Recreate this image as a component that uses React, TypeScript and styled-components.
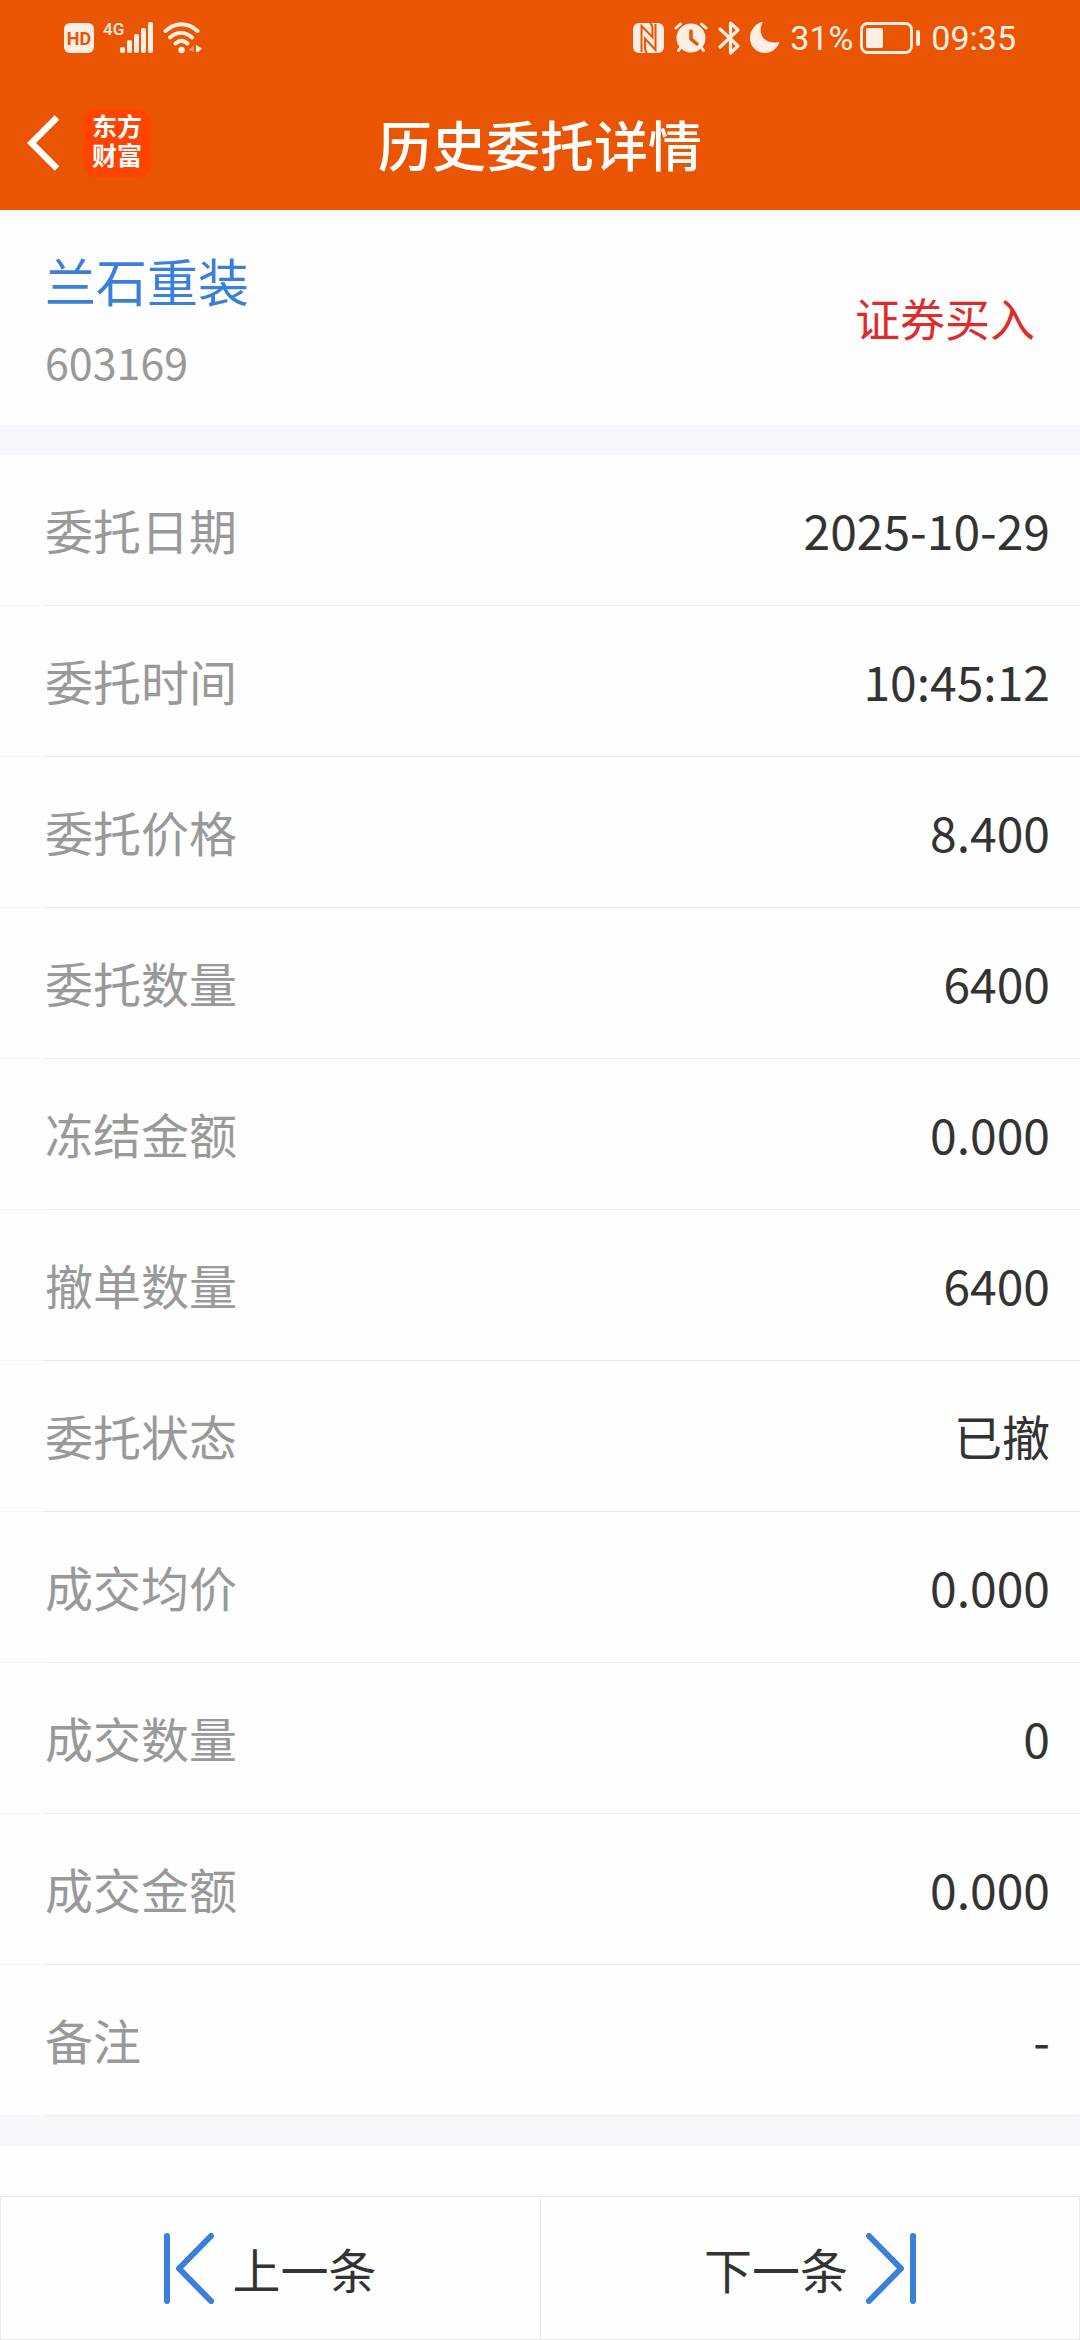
import React from "react";
import styled, { createGlobalStyle } from "styled-components";

const GlobalStyle = createGlobalStyle`
  * { box-sizing: border-box; }
  body {
    margin: 0;
    background: #fefefe;
    color: #333;
    font-family: "Noto Sans CJK SC", "Noto Sans", sans-serif;
  }
  button {
    border: 0;
    margin: 0;
    padding: 0;
    background: none;
    color: inherit;
    font: inherit;
    cursor: pointer;
  }
`;

const Page = styled.div`
  min-height: 100vh;
  display: flex;
  flex-direction: column;
`;

const TopBar = styled.header`
  background: #ea5504;
  color: #fff;
`;

const StatusBar = styled.div`
  height: 75px;
  padding: 0 64px;
  display: flex;
  align-items: center;
  justify-content: space-between;
  color: #ffeee4;
  font-family: Roboto, "Liberation Sans", sans-serif;
`;

const StatusGroup = styled.div<{ $gap: number }>`
  display: flex;
  align-items: center;
  gap: ${({ $gap }) => $gap}px;

  svg { display: block; }
`;

const StatusText = styled.span`
  font-size: 34px;
  line-height: 40px;
`;

const HdBadge = styled.span`
  width: 30px;
  height: 30px;
  border-radius: 6px;
  background: #ffeee4;
  color: #ea5504;
  font-size: 18px;
  font-weight: 700;
  line-height: 31px;
  text-align: center;
`;

const Signal = styled.span`
  position: relative;
  padding-left: 17px;
`;

const Network = styled.span`
  position: absolute;
  top: 0;
  left: 0;
  font-size: 17px;
  font-weight: 500;
  line-height: 14px;
`;

const NavBar = styled.div`
  height: 135px;
  padding: 0 27px;
  display: grid;
  grid-template-columns: 1fr auto 1fr;
  align-items: center;
`;

const NavStart = styled.div`
  display: flex;
  align-items: center;
  gap: 24px;
`;

const BackButton = styled.button`
  svg { display: block; }
`;

const Brand = styled.span`
  width: 68px;
  height: 68px;
  padding: 4px 0;
  border-radius: 14px;
  background: #ff4400;
  font-family: "Liberation Sans", "Noto Sans CJK SC", sans-serif;
  font-size: 25px;
  font-weight: 700;
  text-align: center;
`;

const BrandLine = styled.span`
  display: block;
  line-height: 29px;
`;

const Title = styled.h1`
  margin: 0;
  padding-top: 2px;
  font-size: 54px;
  font-weight: 500;
  line-height: 80px;
`;

const Summary = styled.section`
  padding: 34px 45px;
  display: flex;
  align-items: center;
  justify-content: space-between;
`;

const Stock = styled.div`
  display: flex;
  flex-direction: column;
  gap: 15px;
`;

const StockName = styled.a`
  color: #3a7fd9;
  font-size: 51px;
  line-height: 72px;
  text-decoration: none;
`;

const StockCode = styled.span`
  color: #999;
  font-size: 43px;
  line-height: 60px;
`;

const Side = styled.span`
  color: #e02b2b;
  font-size: 45px;
  line-height: 60px;
`;

const Divider = styled.div`
  height: 30px;
  background: #f6f7fa;
`;

const Details = styled.dl`
  margin: 0;
`;

const Row = styled.div`
  padding: 38px 30px 40px 45px;
  display: flex;
  align-items: center;
  justify-content: space-between;
  border-bottom: 1px solid #ebebeb;
  border-image: linear-gradient(to right, #f7f7f7 45px, #ebebeb 45px) 1;
  font-size: 48px;
  line-height: 72px;
`;

const Label = styled.dt`
  color: #999;
`;

const Value = styled.dd`
  margin: 0;
`;

const Pager = styled.nav`
  margin-top: auto;
  display: grid;
  grid-template-columns: 1fr 1fr;
  border: 1px solid #ebebeb;
`;

const PagerButton = styled.button`
  height: 142px;
  display: flex;
  align-items: center;
  justify-content: center;
  gap: 18px;
  font-size: 48px;
  line-height: 72px;

  & + & { border-left: 1px solid #ebebeb; }
`;

const SignalIcon = () => (
  <svg width="34" height="31" viewBox="0 0 34 31" fill="currentColor" aria-hidden="true">
    <rect x="0" y="25" width="5" height="6" rx="2" />
    <rect x="7" y="18" width="5" height="13" rx="2" />
    <rect x="14" y="12" width="5" height="19" rx="2" />
    <rect x="21" y="6" width="5" height="25" rx="2" />
    <rect x="28" y="0" width="5" height="31" rx="2" />
  </svg>
);

const WifiIcon = () => (
  <svg width="39" height="32" viewBox="0 0 39 32" fill="none" aria-hidden="true">
    <g stroke="currentColor" strokeWidth="4" strokeLinecap="round">
      <path d="M2.500 9C12.500 0 24.500 0 34.500 9" />
      <path d="M7 15.500C14 9.500 22 9.500 29 15.500" />
      <path d="M12.500 21.500C16.500 18 20.500 18 24.500 21.500" />
    </g>
    <circle cx="18.500" cy="28" r="3.200" fill="currentColor" />
    <path d="M31 23V30L25.500 28Z" fill="#ff8a55" />
    <path d="M33 23L39 26.500L35 30H33Z" fill="currentColor" />
  </svg>
);

const NfcIcon = () => (
  <svg width="31" height="30" viewBox="0 0 31 30" aria-hidden="true">
    <rect width="31" height="30" rx="6" fill="currentColor" />
    <path
      d="M8.500 29V3L19.500 14V5Q19.500 2 17 0M22.500 1V27L12 15.500V25Q12 28 14 30"
      fill="none"
      stroke="#ea5504"
      strokeWidth="2"
    />
  </svg>
);

const AlarmIcon = () => (
  <svg width="34" height="31" viewBox="0 0 34 31" fill="none" strokeLinecap="round" aria-hidden="true">
    <g stroke="currentColor" strokeWidth="3">
      <path d="M2 6L6.500 2M32 6L27.500 2M7 25L4.500 28.500M27 25L29.500 28.500" />
    </g>
    <circle cx="17" cy="16" r="14.500" fill="currentColor" />
    <path d="M17 9V17L23 22" stroke="#ea5504" strokeWidth="3.500" />
  </svg>
);

const BluetoothIcon = () => (
  <svg width="22" height="34" viewBox="0 0 22 34" fill="none" stroke="currentColor" strokeWidth="3.200" strokeLinejoin="round" strokeLinecap="round" aria-hidden="true">
    <path d="M2 8L20 25L12.500 32V2L20 9L2 26" />
  </svg>
);

const MoonIcon = () => (
  <svg width="30" height="31" viewBox="0 0 30 31" fill="currentColor" aria-hidden="true">
    <path d="M12.500 0.500C7 12 14.500 23 28 20Q30 19.800 29 21.500C26 27.500 21 31 15 31C6.500 31 0 24.500 0 16C0 8.500 5 2 11.500 0Q13 -.3 12.500 .5Z" />
  </svg>
);

const BatteryIcon = () => (
  <svg width="61" height="32" viewBox="0 0 61 32" aria-hidden="true">
    <rect x="1.500" y="1.500" width="50" height="29" rx="6" fill="none" stroke="currentColor" strokeWidth="2.800" />
    <rect x="6" y="6" width="17" height="20" rx="2" fill="currentColor" />
    <rect x="56" y="8" width="4" height="16" rx="2" fill="currentColor" />
  </svg>
);

const BackIcon = () => (
  <svg width="32" height="56" viewBox="0 0 32 56" fill="none" stroke="#fff" strokeWidth="6.500" aria-hidden="true">
    <path d="M30 2.500L4.500 28L30 53.500" />
  </svg>
);

const EdgeIcon = ({ side }: { side: "first" | "last" }) => (
  <svg width="50" height="71" viewBox="0 0 50 71" fill="none" stroke="#3a7fd9" strokeWidth="6" strokeLinecap="round" strokeLinejoin="round" aria-hidden="true">
    <path d={side === "first" ? "M3 3V68M47 3L15 35.500L47 68" : "M47 3V68M3 3L35 35.500L3 68"} />
  </svg>
);

const details: [string, string][] = [
  ["委托日期", "2025-10-29"],
  ["委托时间", "10:45:12"],
  ["委托价格", "8.400"],
  ["委托数量", "6400"],
  ["冻结金额", "0.000"],
  ["撤单数量", "6400"],
  ["委托状态", "已撤"],
  ["成交均价", "0.000"],
  ["成交数量", "0"],
  ["成交金额", "0.000"],
  ["备注", "-"],
];

export default function App() {
  return (
    <>
      <GlobalStyle />
      <Page>
        <TopBar>
          <StatusBar>
            <StatusGroup $gap={9}>
              <HdBadge>HD</HdBadge>
              <Signal>
                <Network>4G</Network>
                <SignalIcon />
              </Signal>
              <WifiIcon />
            </StatusGroup>
            <StatusGroup $gap={10}>
              <NfcIcon />
              <AlarmIcon />
              <BluetoothIcon />
              <MoonIcon />
              <StatusGroup $gap={7}>
                <StatusText>31%</StatusText>
                <BatteryIcon />
              </StatusGroup>
              <StatusText>09:35</StatusText>
            </StatusGroup>
          </StatusBar>
          <NavBar>
            <NavStart>
              <BackButton type="button" aria-label="返回">
                <BackIcon />
              </BackButton>
              <Brand>
                <BrandLine>东方</BrandLine>
                <BrandLine>财富</BrandLine>
              </Brand>
            </NavStart>
            <Title>历史委托详情</Title>
          </NavBar>
        </TopBar>
        <main>
          <Summary>
            <Stock>
              <StockName href="#603169">兰石重装</StockName>
              <StockCode>603169</StockCode>
            </Stock>
            <Side>证券买入</Side>
          </Summary>
          <Divider />
          <Details>
            {details.map(([label, value]) => (
              <Row key={label}>
                <Label>{label}</Label>
                <Value>{value}</Value>
              </Row>
            ))}
          </Details>
          <Divider />
        </main>
        <Pager>
          <PagerButton type="button">
            <EdgeIcon side="first" />
            上一条
          </PagerButton>
          <PagerButton type="button">
            下一条
            <EdgeIcon side="last" />
          </PagerButton>
        </Pager>
      </Page>
    </>
  );
}
